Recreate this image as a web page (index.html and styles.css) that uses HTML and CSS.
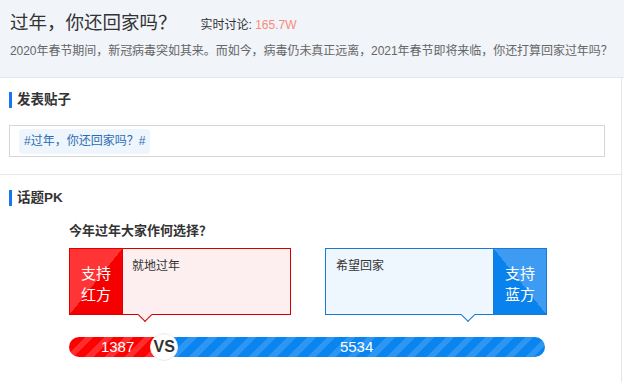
FILE: index.html
```html
<!DOCTYPE html>
<html lang="zh">
<head>
<meta charset="utf-8">
<link rel="stylesheet" href="styles.css">
</head>
<body>
<div class="header">
  <div class="title-row">
    <h1 class="title">过年，你还回家吗？</h1>
    <span class="live">实时讨论: <em class="live-num">165.7W</em></span>
  </div>
  <p class="desc">2020年春节期间，新冠病毒突如其来。而如今，病毒仍未真正远离，2021年春节即将来临，你还打算回家过年吗？</p>
</div>
<div class="main">
  <section class="section post">
    <h2 class="sec-title">发表贴子</h2>
    <div class="input-box">
      <span class="tag">#过年，你还回家吗？#</span>
    </div>
  </section>
  <section class="section pk">
    <h2 class="sec-title">话题PK</h2>
    <div class="pk-body">
      <h3 class="question">今年过年大家作何选择？</h3>
      <div class="cards">
        <div class="card red">
          <div class="btn red-btn">支持<br>红方</div>
          <div class="card-text">就地过年</div>
          <span class="pointer red-pointer"></span>
        </div>
        <div class="card blue">
          <div class="card-text">希望回家</div>
          <div class="btn blue-btn">支持<br>蓝方</div>
          <span class="pointer blue-pointer"></span>
        </div>
      </div>
      <div class="bar">
        <div class="bar-red" style="width:20%">1387</div>
        <div class="bar-blue">5534</div>
        <span class="vs" style="left:20%">VS</span>
      </div>
    </div>
  </section>
</div>
</body>
</html>
```

FILE: styles.css
```css
* { box-sizing: border-box; }
body {
  margin: 0;
  background: #fff;
  font-family: "Liberation Sans", "Noto Sans CJK SC", sans-serif;
  color: #333;
}
.header {
  background: #f1f4f9;
  height: 78px;
  padding: 11px 10px 0;
  border-bottom: 1px solid #e4e7ee;
}
.title-row {
  display: flex;
  align-items: baseline;
}
.title {
  margin: 0;
  font-size: 18.5px;
  font-weight: normal;
  line-height: 24px;
  color: #333;
}
.live {
  margin-left: 24px;
  font-size: 12px;
  color: #333;
}
.live-num {
  font-style: normal;
  color: #f98a7c;
}
.desc {
  margin: 7px 0 0;
  font-size: 12px;
  line-height: 18px;
  color: #666;
  white-space: nowrap;
  letter-spacing: -0.05px;
}
.main {
  width: 622px;
  border-right: 1px solid #e6e6ea;
  min-height: 304px;
}
.section { padding: 14px 0 17px 9px; }
.post { border-bottom: 1px solid #e6e6ee; }
.pk { padding-top: 15px; }
.sec-title {
  margin: 0;
  font-size: 13.5px;
  font-weight: bold;
  line-height: 16px;
  padding-left: 5px;
  border-left: 3px solid #1677f0;
  color: #333;
}
.input-box {
  margin-top: 17px;
  width: 596px;
  height: 32px;
  border: 1px solid #d6d6d6;
  padding: 2px 9px;
  display: flex;
  align-items: center;
}
.tag {
  background: #eef5fd;
  border-radius: 4px;
  padding: 0 5px;
  height: 25px;
  line-height: 25px;
  font-size: 12px;
  color: #2a6db3;
}
.pk-body { padding-left: 60px; }
.question {
  margin: 17px 0 0;
  font-size: 13px;
  font-weight: bold;
  line-height: 16px;
  color: #333;
}
.cards {
  margin-top: 9px;
  display: flex;
  gap: 34px;
}
.card {
  position: relative;
  width: 222px;
  height: 67px;
  display: flex;
}
.card.red { background: #fdefef; border: 1px solid #d40000; }
.card.blue { background: #eef6fe; border: 1px solid #1a78d6; }
.btn {
  width: 54px;
  margin: -1px;
  height: 67px;
  flex: none;
  color: #fff;
  font-size: 15px;
  line-height: 21px;
  display: flex;
  align-items: center;
  justify-content: center;
  text-align: center;
  padding-top: 4px;
}
.red-btn {
  background: linear-gradient(to bottom right, #ff3434 50%, #f50000 50%);
  border: 1px solid #e00000;
}
.blue-btn {
  background: linear-gradient(to bottom left, #3e9bf2 50%, #0a82ee 50%);
  border: 1px solid #1a78d6;
}
.card-text {
  flex: 1;
  padding: 9px 10px;
  font-size: 12px;
  line-height: 16px;
  color: #333;
}
.pointer {
  position: absolute;
  bottom: -6px;
  width: 10px;
  height: 10px;
  transform: rotate(45deg);
}
.red-pointer {
  left: 70px;
  background: #fdefef;
  border-right: 1px solid #d40000;
  border-bottom: 1px solid #d40000;
}
.blue-pointer {
  left: 137px;
  background: #eef6fe;
  border-right: 1px solid #1a78d6;
  border-bottom: 1px solid #1a78d6;
}
.bar {
  position: relative;
  margin-top: 22px;
  width: 476px;
  height: 20px;
  border-radius: 10px;
  display: flex;
}
.bar-red, .bar-blue {
  height: 20px;
  color: #fff;
  font-size: 15px;
  line-height: 20px;
  text-align: center;
}
.bar-red {
  border-radius: 10px 0 0 10px;
  background: repeating-linear-gradient(-45deg, #ff0000 0 8px, #ff2d2d 8px 14px);
  padding-left: 2px;
}
.bar-blue {
  flex: 1;
  border-radius: 0 10px 10px 0;
  background: repeating-linear-gradient(-45deg, #0a85f0 0 8px, #2d96f3 8px 14px);
  padding-left: 4px;
}
.vs {
  position: absolute;
  top: -4px;
  width: 28px;
  height: 28px;
  margin-left: -14px;
  border-radius: 50%;
  background: #fff;
  border: 1px solid #ececec;
  font-size: 16px;
  font-weight: bold;
  line-height: 26px;
  text-align: center;
  color: #333;
}
```
